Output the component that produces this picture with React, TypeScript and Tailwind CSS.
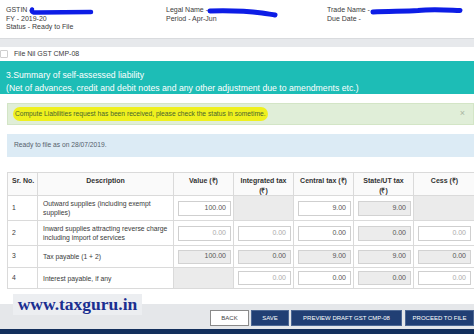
import React from "react";

type Cell =
  | { kind: "input"; v: string; light?: boolean; disabled?: boolean }
  | { kind: "gray" };

const Inp = ({ v, light, disabled, h }: { v: string; light?: boolean; disabled?: boolean; h: string }) => (
  <div
    className={`ml-[4px] w-[53px] ${h} border flex items-center justify-end pr-[4px] text-[7px] ${
      disabled ? "bg-[#ececec] border-[#d2d2d2]" : "bg-white border-[#cfcfcf]"
    } ${light ? "text-[#ababab]" : "text-[#555]"}`}
  >
    {v}
  </div>
);

const rows: { n: string; desc: React.ReactNode; h: string; ih: string; cells: Cell[] }[] = [
  {
    n: "1",
    desc: (
      <>
        Outward supplies (including exempt
        <br />
        supplies)
      </>
    ),
    h: "h-[25px]",
    ih: "h-[15px]",
    cells: [
      { kind: "input", v: "100.00" },
      { kind: "gray" },
      { kind: "input", v: "9.00" },
      { kind: "input", v: "9.00", disabled: true },
      { kind: "gray" },
    ],
  },
  {
    n: "2",
    desc: (
      <>
        Inward supplies attracting reverse charge
        <br />
        including import of services
      </>
    ),
    h: "h-[25px]",
    ih: "h-[15px]",
    cells: [
      { kind: "input", v: "0.00", light: true },
      { kind: "input", v: "0.00", light: true },
      { kind: "input", v: "0.00" },
      { kind: "input", v: "0.00", disabled: true },
      { kind: "input", v: "0.00", light: true },
    ],
  },
  {
    n: "3",
    desc: <>Tax payable (1 + 2)</>,
    h: "h-[22px]",
    ih: "h-[14px]",
    cells: [
      { kind: "input", v: "100.00", disabled: true },
      { kind: "input", v: "0.00", disabled: true },
      { kind: "input", v: "9.00", disabled: true },
      { kind: "input", v: "9.00", disabled: true },
      { kind: "input", v: "0.00", disabled: true },
    ],
  },
  {
    n: "4",
    desc: <>Interest payable, if any</>,
    h: "h-[21px]",
    ih: "h-[14px]",
    cells: [
      { kind: "gray" },
      { kind: "input", v: "0.00", light: true },
      { kind: "input", v: "0.00" },
      { kind: "input", v: "0.00", disabled: true },
      { kind: "input", v: "0.00", light: true },
    ],
  },
];

export default function App() {
  return (
    <div className="relative w-[474px] h-[334px] overflow-hidden bg-white font-['Liberation_Sans',Arial,sans-serif]">
      {/* header */}
      <div className="relative h-[38px] flex pl-[6px] pt-[6px] text-[7px] leading-[8.5px] text-[#3a3a3a]">
        <div className="w-[160px]">
          <div>GSTIN -</div>
          <div>FY - 2019-20</div>
          <div>Status - Ready to File</div>
        </div>
        <div className="w-[161px]">
          <div>Legal Name -</div>
          <div>Period - Apr-Jun</div>
        </div>
        <div>
          <div>Trade Name -</div>
          <div>Due Date -</div>
        </div>
        <svg className="absolute left-0 top-0" width="474" height="38" viewBox="0 0 474 38" fill="none">
          <path d="M32 9.5 Q31 13 37 12.5 L91 12" stroke="#0d1de6" strokeWidth="4.5" strokeLinecap="round" />
          <path d="M210 11 C228 10.5 250 11.5 262 13 C268 14 273 14.5 275 15" stroke="#0d1de6" strokeWidth="5" strokeLinecap="round" />
          <path d="M373 12 C388 11 405 11.5 418 10.5 C432 9 446 10 460 10.5" stroke="#0d1de6" strokeWidth="5" strokeLinecap="round" />
        </svg>
      </div>
      <div className="h-[9px] bg-[#e7e9ec] border-t border-[#d9dbde]" />
      <div className="h-[14px] flex items-center text-[7px] text-[#3a3a3a]">
        <div className="w-[8px] h-[8px] bg-white border border-[#cfcfcf] rounded-[1px]" />
        <span className="ml-[6px]">File Nil GST CMP-08</span>
      </div>
      {/* teal banner */}
      <div className="h-[33px] bg-[#1dbdb6] text-white text-[8.7px] leading-[13px] pl-[6px] pt-[8px] whitespace-nowrap">
        <div>3.Summary of self-assessed liability</div>
        <div>(Net of advances, credit and debit notes and any other adjustment due to amendments etc.)</div>
      </div>
      {/* alert */}
      <div className="mt-[9px] ml-[7px] h-[22px] bg-[#e0eed8] border border-[#d3e5c6] flex items-center pl-[5px] pr-[8px] text-[6.7px] text-[#48652f]">
        <span className="bg-[#eff01e] rounded-full px-[2px] py-[2px] whitespace-nowrap">
          Compute Liabilities request has been received, please check the status in sometime.
        </span>
        <span className="ml-auto text-[9px] text-[#a9b5a2]">×</span>
      </div>
      {/* info */}
      <div className="mt-[9px] ml-[7px] h-[23px] bg-[#dcebf5] flex items-center pl-[7px] text-[6.7px] text-[#55606b]">
        Ready to file as on 28/07/2019.
      </div>
      {/* table */}
      <div className="mt-[15px] pl-[7px]">
        <table className="table-fixed border-collapse w-[468px] text-[6.8px] text-[#3a3a3a]">
          <colgroup>
            <col className="w-[30px]" />
            <col className="w-[136px]" />
            <col className="w-[60px]" />
            <col className="w-[60px]" />
            <col className="w-[60px]" />
            <col className="w-[60px]" />
            <col className="w-[62px]" />
          </colgroup>
          <thead>
            <tr className="h-[23px] bg-[#fafafa] text-[7px] font-bold leading-[9.5px] text-[#333]">
              <th className="border border-[#dadada] align-top pt-[3px] pl-[4px] text-left font-bold">Sr. No.</th>
              <th className="border border-[#dadada] align-top pt-[3px] font-bold">Description</th>
              <th className="border border-[#dadada] align-top pt-[3px] font-bold">Value (₹)</th>
              <th className="border border-[#dadada] align-top pt-[3px] font-bold">
                Integrated tax
                <br />
                (₹)
              </th>
              <th className="border border-[#dadada] align-top pt-[3px] font-bold">Central tax (₹)</th>
              <th className="border border-[#dadada] align-top pt-[3px] font-bold">
                State/UT tax
                <br />
                (₹)
              </th>
              <th className="border border-[#dadada] align-top pt-[3px] font-bold">Cess (₹)</th>
            </tr>
          </thead>
          <tbody>
            {rows.map((r) => (
              <tr key={r.n} className={r.h}>
                <td className="border border-[#dadada] pl-[4px] align-middle">{r.n}</td>
                <td className="border border-[#dadada] pl-[5px] align-middle leading-[9px] whitespace-nowrap">{r.desc}</td>
                {r.cells.map((c, i) =>
                  c.kind === "gray" ? (
                    <td key={i} className="border border-[#dadada] bg-[#ebebeb]" />
                  ) : (
                    <td key={i} className="border border-[#dadada] align-middle">
                      <Inp v={c.v} light={c.light} disabled={c.disabled} h={r.ih} />
                    </td>
                  )
                )}
              </tr>
            ))}
          </tbody>
        </table>
      </div>
      {/* bottom */}
      <div className="mt-[15px] h-[25px] bg-[#e5e7ea] flex justify-end items-start pt-[6px] gap-[2px] text-[6px]">
        <div className="w-[39px] h-[16px] bg-white border border-[#8a8a8a] flex items-center justify-center text-[#444]">BACK</div>
        <div className="w-[38px] h-[16px] bg-[#213f74] border border-[#4d6894] flex items-center justify-center text-white">SAVE</div>
        <div className="w-[111px] h-[16px] bg-[#213f74] border border-[#4d6894] flex items-center justify-center text-white">PREVIEW DRAFT GST CMP-08</div>
        <div className="ml-[1px] w-[69px] h-[16px] bg-[#213f74] border border-[#4d6894] flex items-center justify-center text-white">PROCEED TO FILE</div>
      </div>
      <div className="h-[6px] bg-[#132f5c]" />
      {/* watermark */}
      <div className="absolute left-[13px] top-[294px] w-[129px] h-[21px] bg-[#eceef1] flex items-center justify-center font-['Liberation_Serif',serif] font-bold text-[17.5px] leading-none text-[#1b2f90]">
        www.taxguru.in
      </div>
    </div>
  );
}
